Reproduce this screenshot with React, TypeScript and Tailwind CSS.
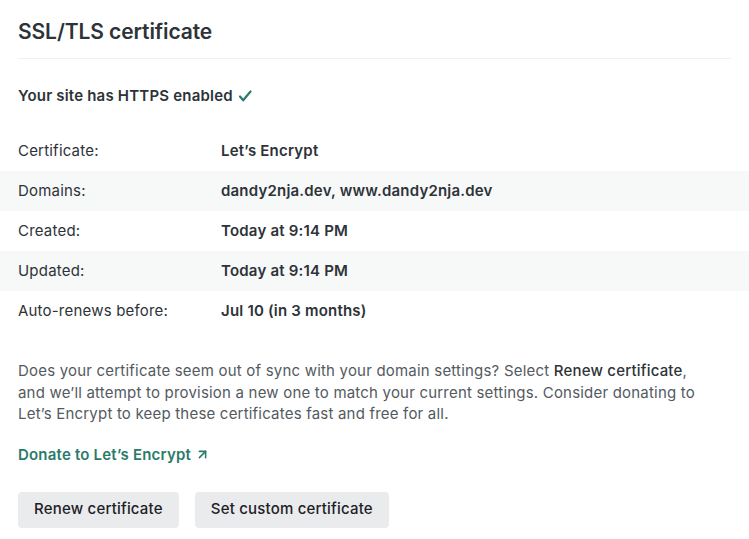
import { ArrowUpRight } from "lucide-react";

const rows = [
  { label: "Certificate:", value: "Let’s Encrypt" },
  { label: "Domains:", value: "dandy2nja.dev, www.dandy2nja.dev" },
  { label: "Created:", value: "Today at 9:14 PM" },
  { label: "Updated:", value: "Today at 9:14 PM" },
  { label: "Auto-renews before:", value: "Jul 10 (in 3 months)" },
];

export default function App() {
  return (
    <div className="min-h-screen bg-white font-['Inter',sans-serif] tracking-[0.2px] text-[#2d3338]">
      <div className="px-[18px] pt-[18px]">
        <h2 className="border-b border-[#eef0f1] pb-[12px] text-[21px] font-semibold leading-[28px] tracking-[-0.1px]">
          SSL/TLS certificate
        </h2>
        <p className="mt-[26px] flex items-center gap-1 text-[15px] font-semibold leading-[22px]">
          Your site has HTTPS enabled
          <svg viewBox="0 0 16 16" className="h-[16px] w-[16px] text-[#2b7a6b]" fill="none" stroke="currentColor" strokeWidth="2.2" strokeLinecap="round" strokeLinejoin="round">
            <path d="M3 8.5l3.2 3.8L13.5 3.5" />
          </svg>
        </p>
      </div>

      <div className="mt-[24px]">
        {rows.map((r, i) => (
          <div
            key={r.label}
            className={`flex h-[40px] items-center px-[18px] text-[15px] ${i % 2 === 1 ? "bg-[#f7f8f8]" : ""}`}
          >
            <span className="w-[203px] shrink-0">{r.label}</span>
            <span className="font-semibold">{r.value}</span>
          </div>
        ))}
      </div>

      <div className="px-[18px] pt-[29px]">
        <p className="max-w-[695px] text-[15px] leading-[21.5px] text-[#545a61]">
          Does your certificate seem out of sync with your domain settings? Select{" "}
          <span className="font-medium text-[#2d3338]">Renew certificate</span>, and we’ll attempt to provision a new one to match your current settings. Consider donating to Let’s Encrypt to keep these certificates fast and free for all.
        </p>
        <a href="#" className="mt-[19px] inline-flex items-center gap-[4px] text-[15px] font-semibold leading-[22px] text-[#2b7a6b]">
          Donate to Let’s Encrypt
          <ArrowUpRight className="h-[15px] w-[15px]" strokeWidth={2.5} />
        </a>
        <div className="mt-[26px] flex gap-4">
          <button className="h-[36px] rounded-[4px] bg-[#e9ebed] px-4 text-[15px] font-medium text-[#1d2125]">
            Renew certificate
          </button>
          <button className="h-[36px] rounded-[4px] bg-[#e9ebed] px-4 text-[15px] font-medium text-[#1d2125]">
            Set custom certificate
          </button>
        </div>
      </div>
    </div>
  );
}
